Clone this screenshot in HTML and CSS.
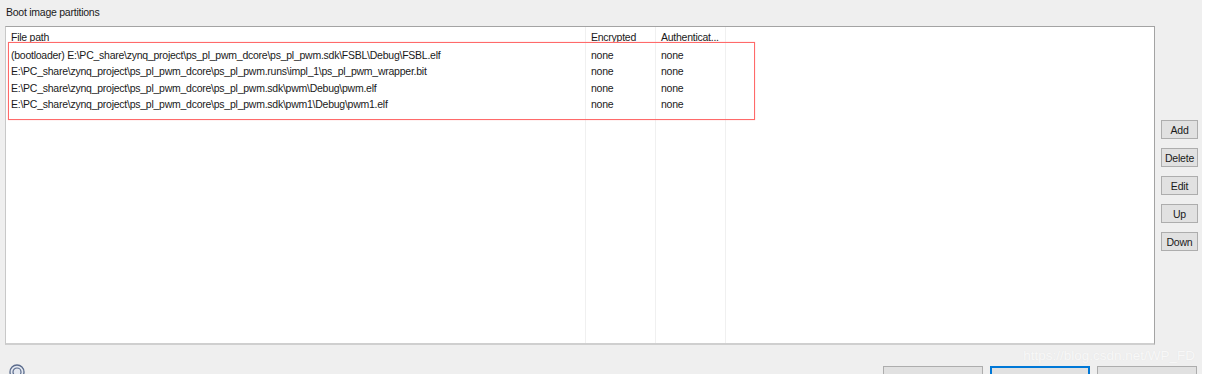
FILE: index.html
```html
<!DOCTYPE html>
<html>
<head>
<title>Boot image partitions</title>
<link rel="stylesheet" href="styles.css">
</head>
<body>
<div class="window">
  <div class="panel">
    <div class="title">Boot image partitions</div>

    <div class="middle">
      <div class="table">
        <div class="cols">
          <div class="col c1"></div>
          <div class="col c2"></div>
          <div class="col c3"></div>
        </div>
        <div class="row head">
          <span class="c1">File path</span>
          <span class="c2">Encrypted</span>
          <span class="c3">Authenticat...</span>
        </div>
        <div class="row first">
          <span class="c1">(bootloader) E:\PC_share\zynq_project\ps_pl_pwm_dcore\ps_pl_pwm.sdk\FSBL\Debug\FSBL.elf</span>
          <span class="c2">none</span>
          <span class="c3">none</span>
        </div>
        <div class="row">
          <span class="c1">E:\PC_share\zynq_project\ps_pl_pwm_dcore\ps_pl_pwm.runs\impl_1\ps_pl_pwm_wrapper.bit</span>
          <span class="c2">none</span>
          <span class="c3">none</span>
        </div>
        <div class="row">
          <span class="c1">E:\PC_share\zynq_project\ps_pl_pwm_dcore\ps_pl_pwm.sdk\pwm\Debug\pwm.elf</span>
          <span class="c2">none</span>
          <span class="c3">none</span>
        </div>
        <div class="row">
          <span class="c1">E:\PC_share\zynq_project\ps_pl_pwm_dcore\ps_pl_pwm.sdk\pwm1\Debug\pwm1.elf</span>
          <span class="c2">none</span>
          <span class="c3">none</span>
        </div>
        <div class="mark"></div>
      </div>

      <div class="side">
        <button>Add</button>
        <button>Delete</button>
        <button>Edit</button>
        <button>Up</button>
        <button>Down</button>
      </div>
    </div>

    <div class="bottom">
      <svg class="help" width="16" height="16" viewBox="0 0 16 16">
        <circle cx="8" cy="8" r="7" fill="#e4e8f0" stroke="#5a6b8c" stroke-width="1.3"/>
        <circle cx="8" cy="8" r="4" fill="none" stroke="#5a6b8c" stroke-width="1.2"/>
      </svg>
      <div class="actions">
        <button class="wide"></button>
        <button class="wide default"></button>
        <button class="wide"></button>
      </div>
      <div class="watermark">https://blog.csdn.net/WP_FD</div>
    </div>
  </div>
  <div class="edge"></div>
</div>
</body>
</html>
```

FILE: styles.css
```css
body {
  margin: 0;
  font-family: "Liberation Sans", Arial, sans-serif;
  font-size: 10.5px;
  letter-spacing: -0.25px;
  color: #1a1a1a;
  overflow: hidden;
}

.window {
  display: flex;
  height: 374px;
}

.panel {
  width: 1202px;
  background: #efefef;
  display: flex;
  flex-direction: column;
  position: relative;
  overflow: hidden;
}

.edge {
  flex: 1;
  background: #fff;
}

.title {
  flex-shrink: 0;
  height: 26px;
  line-height: 24px;
  padding-left: 6px;
}

.middle {
  flex-shrink: 0;
  display: flex;
  height: 319px;
}

.table {
  position: relative;
  width: 1150px;
  margin-left: 5px;
  background: #fff;
  border: 1px solid #a3a3a3;
  border-left-color: #c8c8c8;
  border-bottom: 2px solid #cfcfcf;
  box-sizing: border-box;
}

.cols {
  position: absolute;
  top: 0;
  bottom: 0;
  left: 0;
  display: flex;
}

.col {
  border-right: 1px solid #f0f0f0;
}

.c1 {
  width: 579px;
}

.c2 {
  width: 69px;
}

.c3 {
  width: 69px;
}

.row {
  position: relative;
  display: flex;
  height: 16.4px;
  line-height: 16px;
}

.row span {
  padding-left: 5px;
  white-space: nowrap;
  overflow: hidden;
  box-sizing: border-box;
}

.row span.c1 {
  width: 580px;
}

.row span.c2,
.row span.c3 {
  width: 70px;
}

.head {
  height: 18px;
  line-height: 18px;
  margin-top: 1px;
}

.first {
  margin-top: 1px;
}

.mark {
  position: absolute;
  left: 2px;
  top: 15px;
  width: 747px;
  height: 78px;
  border: 1.5px solid #ff6a6a;
  box-shadow: 0 0 1px #ffb0b0;
  box-sizing: border-box;
}

.side {
  display: flex;
  flex-direction: column;
  gap: 9px;
  padding-top: 94px;
  padding-left: 6px;
}

.side button {
  width: 37px;
  height: 19px;
  padding: 0;
  font-family: inherit;
  font-size: 10.5px;
  letter-spacing: -0.2px;
  color: #1a1a1a;
  background: #e1e1e1;
  border: 1px solid #adadad;
}

.bottom {
  position: relative;
  flex: 1;
  display: flex;
}

.help {
  flex-shrink: 0;
  margin: 19px 0 0 9px;
}

.actions {
  flex-shrink: 0;
  margin-left: auto;
  margin-right: 5px;
  margin-top: 21px;
  display: flex;
  gap: 7px;
}

.wide {
  width: 100px;
  height: 24px;
  background: #e1e1e1;
  border: 1px solid #adadad;
}

.wide.default {
  border: 2px solid #0078d7;
}

.watermark {
  position: absolute;
  right: 7px;
  top: 3px;
  font-family: "Liberation Sans", sans-serif;
  font-size: 13.5px;
  letter-spacing: 0;
  color: #f8f8f8;
  text-shadow: 0 0 1px #e2e2e2;
}
```
